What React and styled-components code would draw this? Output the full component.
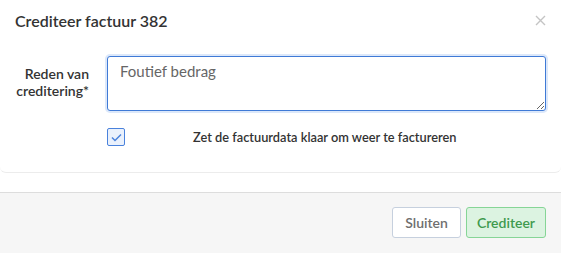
import React from "react";
import styled, { createGlobalStyle } from "styled-components";

const GlobalStyle = createGlobalStyle`
  html, body {
    margin: 0;
    padding: 0;
    background: #ffffff;
  }
  body {
    font-family: "Lato", "Liberation Sans", sans-serif;
    color: #333333;
  }
`;

const Modal = styled.div`
  width: 561px;
  height: 253px;
  display: flex;
  flex-direction: column;
  background: #ffffff;
  overflow: hidden;
`;

const Header = styled.div`
  height: 40px;
  display: flex;
  align-items: center;
  justify-content: space-between;
  padding: 0 15px;
  box-sizing: border-box;
`;

const Title = styled.h4`
  margin: 0;
  font-size: 16px;
  font-weight: 600;
  color: #333333;
`;

const CloseButton = styled.button`
  border: 0;
  background: none;
  padding: 0;
  width: 12px;
  height: 12px;
  display: flex;
  align-items: center;
  justify-content: center;
  cursor: pointer;
`;

const Body = styled.div`
  border-bottom: 1px solid #ececec;
  border-radius: 0 0 6px 6px;
  padding: 15px 15px 26px;
  display: flex;
  flex-direction: column;
  gap: 17px;
`;

const FieldRow = styled.div`
  display: flex;
  align-items: flex-start;
  gap: 18px;
`;

const Label = styled.label`
  width: 74px;
  text-align: right;
  font-size: 14px;
  font-weight: 600;
  line-height: 17px;
  padding-top: 10px;
  color: #333333;
`;

const TextArea = styled.textarea`
  flex: 1;
  height: 55px;
  box-sizing: border-box;
  border: 1px solid #3f7ad6;
  border-radius: 3px;
  box-shadow: 0 0 0 2px #dce8fa;
  padding: 5px 12px;
  font-family: "Lato", "Liberation Sans", sans-serif;
  font-size: 15px;
  color: #666666;
  resize: vertical;
  outline: none;
  margin-top: 1px;
`;

const CheckRow = styled.div`
  display: flex;
  align-items: center;
  padding-left: 92px;
  height: 18px;
`;

const CheckBox = styled.span`
  width: 16px;
  height: 16px;
  border: 1px solid #4a82dc;
  border-radius: 2px;
  background: #eaf1fc;
  display: flex;
  align-items: center;
  justify-content: center;
`;

const CheckLabel = styled.span`
  margin-left: 68px;
  font-size: 12.8px;
  font-weight: 600;
  color: #333333;
`;

const Spacer = styled.div`
  height: 19px;
`;

const Footer = styled.div`
  flex: 1;
  background: #f6f6f6;
  border-top: 1px solid #dddddd;
  display: flex;
  justify-content: flex-end;
  align-items: flex-start;
  gap: 5px;
  padding: 14px 15px 0;
`;

const Button = styled.button`
  height: 31px;
  padding: 0 ${(p) => (p.$primary ? "10px" : "12px")};
  border-radius: 3px;
  border: 1px solid ${(p) => (p.$primary ? "#86d596" : "#c6d0de")};
  background: ${(p) => (p.$primary ? "#dcf3e1" : "#ffffff")};
  color: ${(p) => (p.$primary ? "#3f9a4e" : "#6f6f6f")};
  font-family: "Lato", "Liberation Sans", sans-serif;
  font-size: 14px;
  font-weight: 600;
  cursor: pointer;
`;

export default function App() {
  return (
    <>
      <GlobalStyle />
      <Modal>
        <Header>
          <Title>Crediteer factuur 382</Title>
          <CloseButton aria-label="Sluiten">
            <svg width="11" height="11" viewBox="0 0 11 11">
              <path d="M1 1L10 10M10 1L1 10" stroke="#c4c4c4" strokeWidth="1.4" />
            </svg>
          </CloseButton>
        </Header>
        <Body>
          <FieldRow>
            <Label>Reden van creditering*</Label>
            <TextArea defaultValue="Foutief bedrag" />
          </FieldRow>
          <CheckRow>
            <CheckBox>
              <svg width="11" height="9" viewBox="0 0 11 9">
                <path d="M1 4.5L4 7.5L10 1.5" fill="none" stroke="#4a82dc" strokeWidth="1.5" />
              </svg>
            </CheckBox>
            <CheckLabel>Zet de factuurdata klaar om weer te factureren</CheckLabel>
          </CheckRow>
        </Body>
        <Spacer />
        <Footer>
          <Button>Sluiten</Button>
          <Button $primary>Crediteer</Button>
        </Footer>
      </Modal>
    </>
  );
}
